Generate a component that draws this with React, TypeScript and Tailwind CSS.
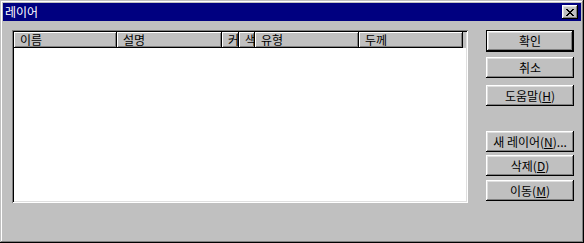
import React from "react";

const raised =
  "shadow-[inset_-1px_-1px_#000000,inset_1px_1px_#ffffff,inset_-2px_-2px_#808080,inset_2px_2px_#dfdfdf]";
const headerCell =
  "shadow-[inset_-1px_-1px_#000000,inset_1px_1px_#ffffff,inset_-2px_-2px_#808080]";
const sunken =
  "shadow-[inset_1px_1px_#808080,inset_-1px_-1px_#ffffff,inset_2px_2px_#000000,inset_-2px_-2px_#dfdfdf]";

const columns = [
  { label: "이름", w: "w-[103px]" },
  { label: "설명", w: "w-[105px]" },
  { label: "커", w: "w-[17px]" },
  { label: "색", w: "w-[16px]" },
  { label: "유형", w: "w-[104px]" },
  { label: "두께", w: "w-[104px]" },
];

function Btn({
  children,
  def,
  className = "",
}: {
  children: React.ReactNode;
  def?: boolean;
  className?: string;
}) {
  if (def) {
    return (
      <div className={`w-[88px] h-[22px] border border-black ${className}`}>
        <div className={`h-full w-full flex items-center justify-center ${raised}`}>
          {children}
        </div>
      </div>
    );
  }
  return (
    <div
      className={`w-[88px] h-[21px] flex items-center justify-center ${raised} ${className}`}
    >
      {children}
    </div>
  );
}

export default function App() {
  return (
    <div
      className="w-[584px] h-[243px] bg-[#c0c0c0] p-[3px] flex flex-col text-[12px] text-black leading-none shadow-[inset_-1px_-1px_#000000,inset_1px_1px_#c0c0c0,inset_-2px_-2px_#808080,inset_2px_2px_#ffffff]"
      style={{ fontFamily: '"Noto Sans CJK KR", "Noto Sans", sans-serif' }}
    >
      {/* title bar */}
      <div className="h-[18px] bg-[#000080] flex items-center justify-between pl-[2px] pr-[3px] shrink-0">
        <span className="text-white text-[12px]">레이어</span>
        <div className={`w-[16px] h-[14px] bg-[#c0c0c0] flex items-center justify-center ${raised}`}>
          <svg width="8" height="7" viewBox="0 0 8 7">
            <path
              d="M0 0h2v1h1v1h2V1h1V0h2v1H7v1H6v1H5v1h1v1h1v1h1v1H6V6H5V5H3v1H2v1H0V6h1V5h1V4h1V3H2V2H1V1H0z"
              fill="#000"
            />
          </svg>
        </div>
      </div>

      {/* body */}
      <div className="flex pl-[9px] pt-[9px]">
        <div className={`w-[456px] h-[173px] bg-white p-[2px] ${sunken}`}>
          <div className="flex h-[16px] bg-[#c0c0c0]">
            {columns.map((c) => (
              <div
                key={c.label}
                className={`${c.w} h-full flex items-center pl-[6px] overflow-hidden whitespace-nowrap ${headerCell}`}
              >
                {c.label}
              </div>
            ))}
          </div>
        </div>

        <div className="ml-[18px] flex flex-col">
          <Btn def>확인</Btn>
          <Btn className="mt-[5px]">취소</Btn>
          <Btn className="mt-[7px]">
            도움말(<span className="underline">H</span>)
          </Btn>
          <Btn className="mt-[25px]">
            새 레이어(<span className="underline">N</span>)...
          </Btn>
          <Btn className="mt-[3px]">
            삭제(<span className="underline">D</span>)
          </Btn>
          <Btn className="mt-[4px]">
            이동(<span className="underline">M</span>)
          </Btn>
        </div>
      </div>
    </div>
  );
}
